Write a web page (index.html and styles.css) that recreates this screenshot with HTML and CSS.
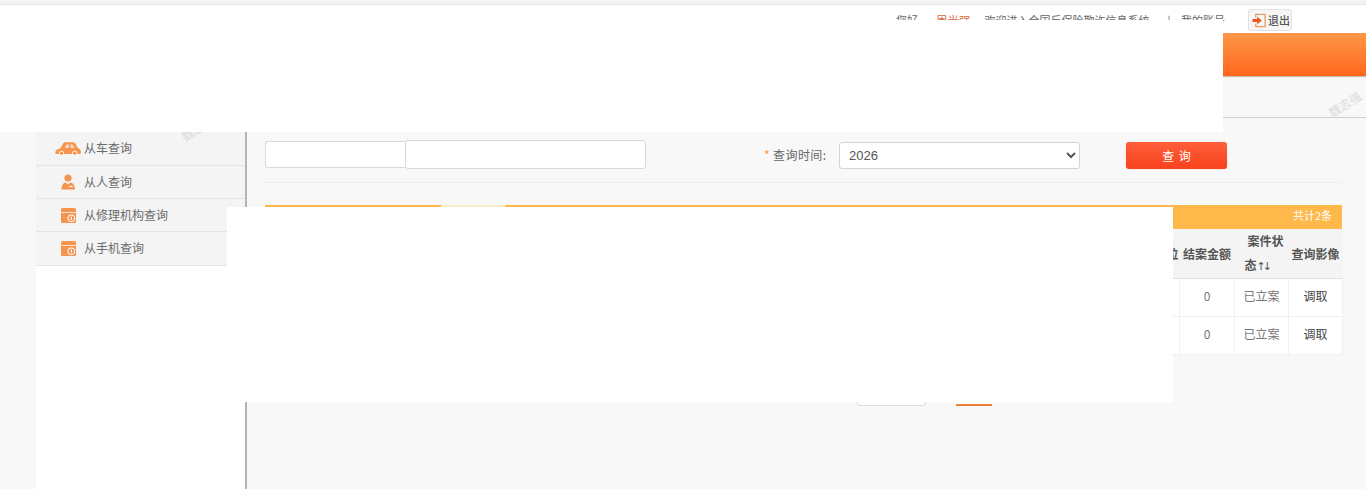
FILE: index.html
```html
<!DOCTYPE html>
<html lang="zh-CN">
<head>
<meta charset="utf-8">
<title>全国反保险欺诈信息系统</title>
<link rel="stylesheet" href="styles.css">
</head>
<body>
<div class="top-line"></div>
<header class="top-bar">
  <span class="greet">您好，</span>
  <span class="user">周光强</span>
  <span class="welcome">欢迎进入全国反保险欺诈信息系统</span>
  <span class="account">| 我的账号</span>
  <a class="logout">
    <svg class="logout-icon" viewBox="0 0 16 16" width="15" height="15"><path d="M4 4.500V1.500h10v13H4v-3" fill="none" stroke="#ec9a5c" stroke-width="1.400"/><path d="M0.500 6.500h5V3.800L10.500 8l-5 4.200V9.500h-5z" fill="#ee5a1e"/></svg>
    <span>退出</span>
  </a>
</header>
<nav class="nav-bar"></nav>
<div class="sub-bar"><span class="mark mark-right">魏志强</span></div>
<main class="main">
  <aside class="side">
    <span class="mark mark-left">魏志强</span>
    <div class="side-head"></div>
    <ul class="menu">
      <li class="menu-item">
        <span class="menu-icon"><svg viewBox="0 0 26 14" width="26" height="14"><path d="M0.300 11C0.300 8 3 7 5.500 6.300L8 1.800C8.600.8 9.600.3 11 .3h6.500c1.400 0 2.300.5 3 1.500L23 6.200c2 .6 3 2 3 4.300 0 .9-.4 1.400-1.300 1.400H1.500c-.8 0-1.200-.3-1.200-.900z" fill="#f5944f"/><path d="M9.800 6L11.300 2.500h2.600V6zM15.300 2.500h2.300L19.500 6h-4.200z" fill="#fcd9bd"/><circle cx="6.500" cy="11.300" r="2.600" fill="#fff"/><circle cx="6.500" cy="11.300" r="1.800" fill="#f5944f"/><circle cx="19.700" cy="11.300" r="2.600" fill="#fff"/><circle cx="19.700" cy="11.300" r="1.800" fill="#f5944f"/></svg></span>
        <span>从车查询</span>
      </li>
      <li class="menu-item">
        <span class="menu-icon"><svg viewBox="0 0 14 16" width="14" height="16"><circle cx="7" cy="4" r="3.600" fill="#f5944f"/><path d="M0.500 15.500c0-4 1.500-6.600 4-7l2.500 2 2.500-2c2.500.4 4.500 3 4.500 7z" fill="#f5944f"/><path d="M8 12.500h3.500" stroke="#fff" stroke-width="1.200"/></svg></span>
        <span>从人查询</span>
      </li>
      <li class="menu-item">
        <span class="menu-icon"><svg viewBox="0 0 15 15" width="15" height="15"><rect width="15" height="15" rx="1.500" fill="#f5944f"/><path d="M0 4.500h15" stroke="#fff" stroke-width=".7"/><circle cx="10.300" cy="10.300" r="3.800" fill="#fff"/><circle cx="10.300" cy="10.300" r="2.800" fill="#f5944f"/><path d="M10.300 8.500v3.600" stroke="#fff" stroke-width="1.100"/></svg></span>
        <span>从修理机构查询</span>
      </li>
      <li class="menu-item">
        <span class="menu-icon"><svg viewBox="0 0 15 15" width="15" height="15"><rect width="15" height="15" rx="1.500" fill="#f5944f"/><path d="M0 4.500h15" stroke="#fff" stroke-width=".7"/><circle cx="10.300" cy="10.300" r="3.800" fill="#fff"/><circle cx="10.300" cy="10.300" r="2.800" fill="#f5944f"/><path d="M10.300 8.500v3.600" stroke="#fff" stroke-width="1.100"/></svg></span>
        <span>从手机查询</span>
      </li>
    </ul>
  </aside>
  <section class="content">
    <form class="search">
      <input class="field field-a" type="text">
      <input class="field field-b" type="text">
      <label class="time-label"><span class="star">*</span> 查询时间:</label>
      <select class="year"><option>2026</option></select>
      <button class="query" type="button">查 询</button>
    </form>
    <div class="rule"></div>
    <div class="result-bar">
      <span class="tab"></span>
      <span class="total">共计2条</span>
    </div>
    <table class="grid">
      <colgroup>
        <col class="col-rest"><col class="col-amount"><col class="col-state"><col class="col-image">
      </colgroup>
      <thead>
        <tr><th class="th-rest">立案单位</th><th>结案金额</th><th class="th-sort">案件状态<span class="arrows">↑↓</span></th><th>查询影像</th></tr>
      </thead>
      <tbody>
        <tr><td></td><td>0</td><td>已立案</td><td class="fetch">调取</td></tr>
        <tr><td></td><td>0</td><td>已立案</td><td class="fetch">调取</td></tr>
      </tbody>
    </table>
    <div class="pager">
      <span class="pager-box"></span>
      <span class="pager-current"></span>
    </div>
  </section>
</main>
<div class="cover cover-top"></div>
<div class="cover cover-mid"></div>
</body>
</html>
```

FILE: styles.css
```css
* { box-sizing: border-box; }
html, body { margin: 0; padding: 0; height: 100%; }
body {
  position: relative;
  display: flex;
  flex-direction: column;
  overflow: hidden;
  background: #f8f8f8;
  color: #555;
  font: 12px/1.4 "Noto Sans CJK SC", "Liberation Sans", sans-serif;
}
.top-line {
  height: 5px;
  flex: none;
  background: #f3f3f3;
  border-bottom: 1px solid #e6e6e6;
}
.top-bar {
  height: 28px;
  flex: none;
  display: flex;
  align-items: flex-start;
  background: #fff;
  font-size: 11px;
  line-height: 16px;
  padding: 7px 0 0 896px;
  color: #666;
}
.user { margin-left: 7px; color: #d9683a; font-size: 11.5px; }
.welcome { margin-left: 14px; }
.account { margin-left: 18px; word-spacing: 8px; }
.logout {
  display: flex;
  align-items: center;
  gap: 1px;
  width: 44px;
  height: 22px;
  margin: -3px 0 0 23px;
  padding-left: 3px;
  border: 1px solid #e2e2e2;
  border-radius: 3px;
  background: #f6f6f6;
  color: #555;
  font-weight: 500;
}
.logout-icon { flex: none; }
.nav-bar {
  height: 43px;
  flex: none;
  background: linear-gradient(#ff9747, #ff671d);
  box-shadow: 0 1px 1px rgba(120, 80, 50, .35);
}
.sub-bar {
  position: relative;
  height: 42px;
  flex: none;
  border-bottom: 1px solid #cfcfcf;
}
.mark {
  position: absolute;
  color: #dadada;
  font-size: 12px;
  white-space: nowrap;
  transform: rotate(-32deg);
}
.mark-right { left: 1327px; top: 20px; }
.mark-left { left: 144px; top: 2px; }
.main {
  flex: 1;
  display: flex;
  min-height: 0;
  padding-left: 36px;
}
.side {
  position: relative;
  width: 211px;
  flex: none;
  background: #fff;
  border-right: 2px solid #b4b4b4;
}
.side-head { height: 14.600px; background: #f4f4f4; }
.menu {
  list-style: none;
  margin: 0;
  padding: 0;
  background: #f4f4f4;
}
.menu-item {
  display: flex;
  align-items: center;
  height: 33.300px;
  border-bottom: 1px solid #e4e4e4;
  padding-left: 17px;
  color: #6b6b6b;
  font-size: 12px;
}
.menu-icon {
  display: flex;
  justify-content: center;
  align-items: center;
  width: 30px;
  margin-right: 1px;
}
.content {
  flex: 1;
  min-width: 0;
  padding: 22px 24px 0 18px;
}
.search {
  display: flex;
  align-items: center;
  height: 29px;
}
.field {
  background: #fff;
  border: 1px solid #d9d9d9;
  outline: 0;
  padding: 0;
}
.field-a { width: 140px; height: 27px; border-radius: 3px 0 0 3px; border-right: 0; }
.field-b { width: 241px; height: 29px; border-radius: 3px; }
.time-label { margin: 1px 0 0 118px; color: #666; white-space: nowrap; width: 75px; letter-spacing: .4px; }
.star { color: #f5944f; }
.year {
  width: 241px;
  height: 27px;
  margin-top: 1px;
  background: #fff;
  border: 1px solid #d4d4d4;
  border-radius: 3px;
  padding-left: 5px;
  color: #555;
  font: 13px "Liberation Sans", sans-serif;
}
.query {
  width: 101px;
  height: 27px;
  margin: 1px 0 0 46px;
  border: 0;
  border-radius: 3px;
  background: linear-gradient(#ff5f3c, #f8421c);
  color: #fff;
  font: 12px "Noto Sans CJK SC", sans-serif;
  word-spacing: 2px;
  box-shadow: 0 0 1px #f79a7a;
}
.rule { height: 1px; margin-top: 13px; background: #eee; }
.result-bar {
  display: flex;
  justify-content: space-between;
  height: 24px;
  margin-top: 22px;
  background: #ffb94b;
  color: #fff;
  font-size: 11px;
}
.tab { width: 64px; height: 2px; margin-left: 176px; background: #fbeecb; }
.total { padding: 3px 10px 0 0; }
.grid {
  width: 1077px;
  table-layout: fixed;
  border-collapse: collapse;
  background: #fff;
}
.col-rest { width: 914px; }
.col-amount { width: 55px; }
.col-state { width: 54px; }
.col-image { width: 54px; }
.grid th {
  height: 48px;
  padding: 0;
  background: #f4f4f4;
  border-bottom: 1px solid #e2e2e2;
  color: #555;
  font-size: 12px;
  line-height: 23.500px;
  font-weight: 700;
}
.grid .th-rest { text-align: right; padding-right: 1px; }
.grid .th-sort { padding: 0 0 0 10px; text-align: left; text-indent: 3px; }
.arrows {
  font-family: "DejaVu Sans", sans-serif;
  font-size: 11px;
  font-weight: 400;
  letter-spacing: -3px;
}
.grid td {
  height: 38px;
  padding: 0 0 2px;
  text-align: center;
  border: 1px solid #f0f0f0;
  color: #777;
}
.grid .fetch { color: #444; }
.pager {
  display: flex;
  align-items: flex-end;
  height: 51px;
  padding-left: 592px;
}
.pager-box {
  width: 69px;
  height: 26px;
  background: #fff;
  border: 1px solid #ddd;
  border-radius: 3px;
}
.pager-current {
  width: 36px;
  height: 26px;
  margin-left: 30px;
  background: #fff;
  border-bottom: 2px solid #e8813a;
}
.cover { position: absolute; background: #fff; }
.cover-top { left: 0; top: 20px; width: 1223px; height: 112px; }
.cover-mid { left: 227px; top: 207px; width: 946px; height: 195px; }
```
